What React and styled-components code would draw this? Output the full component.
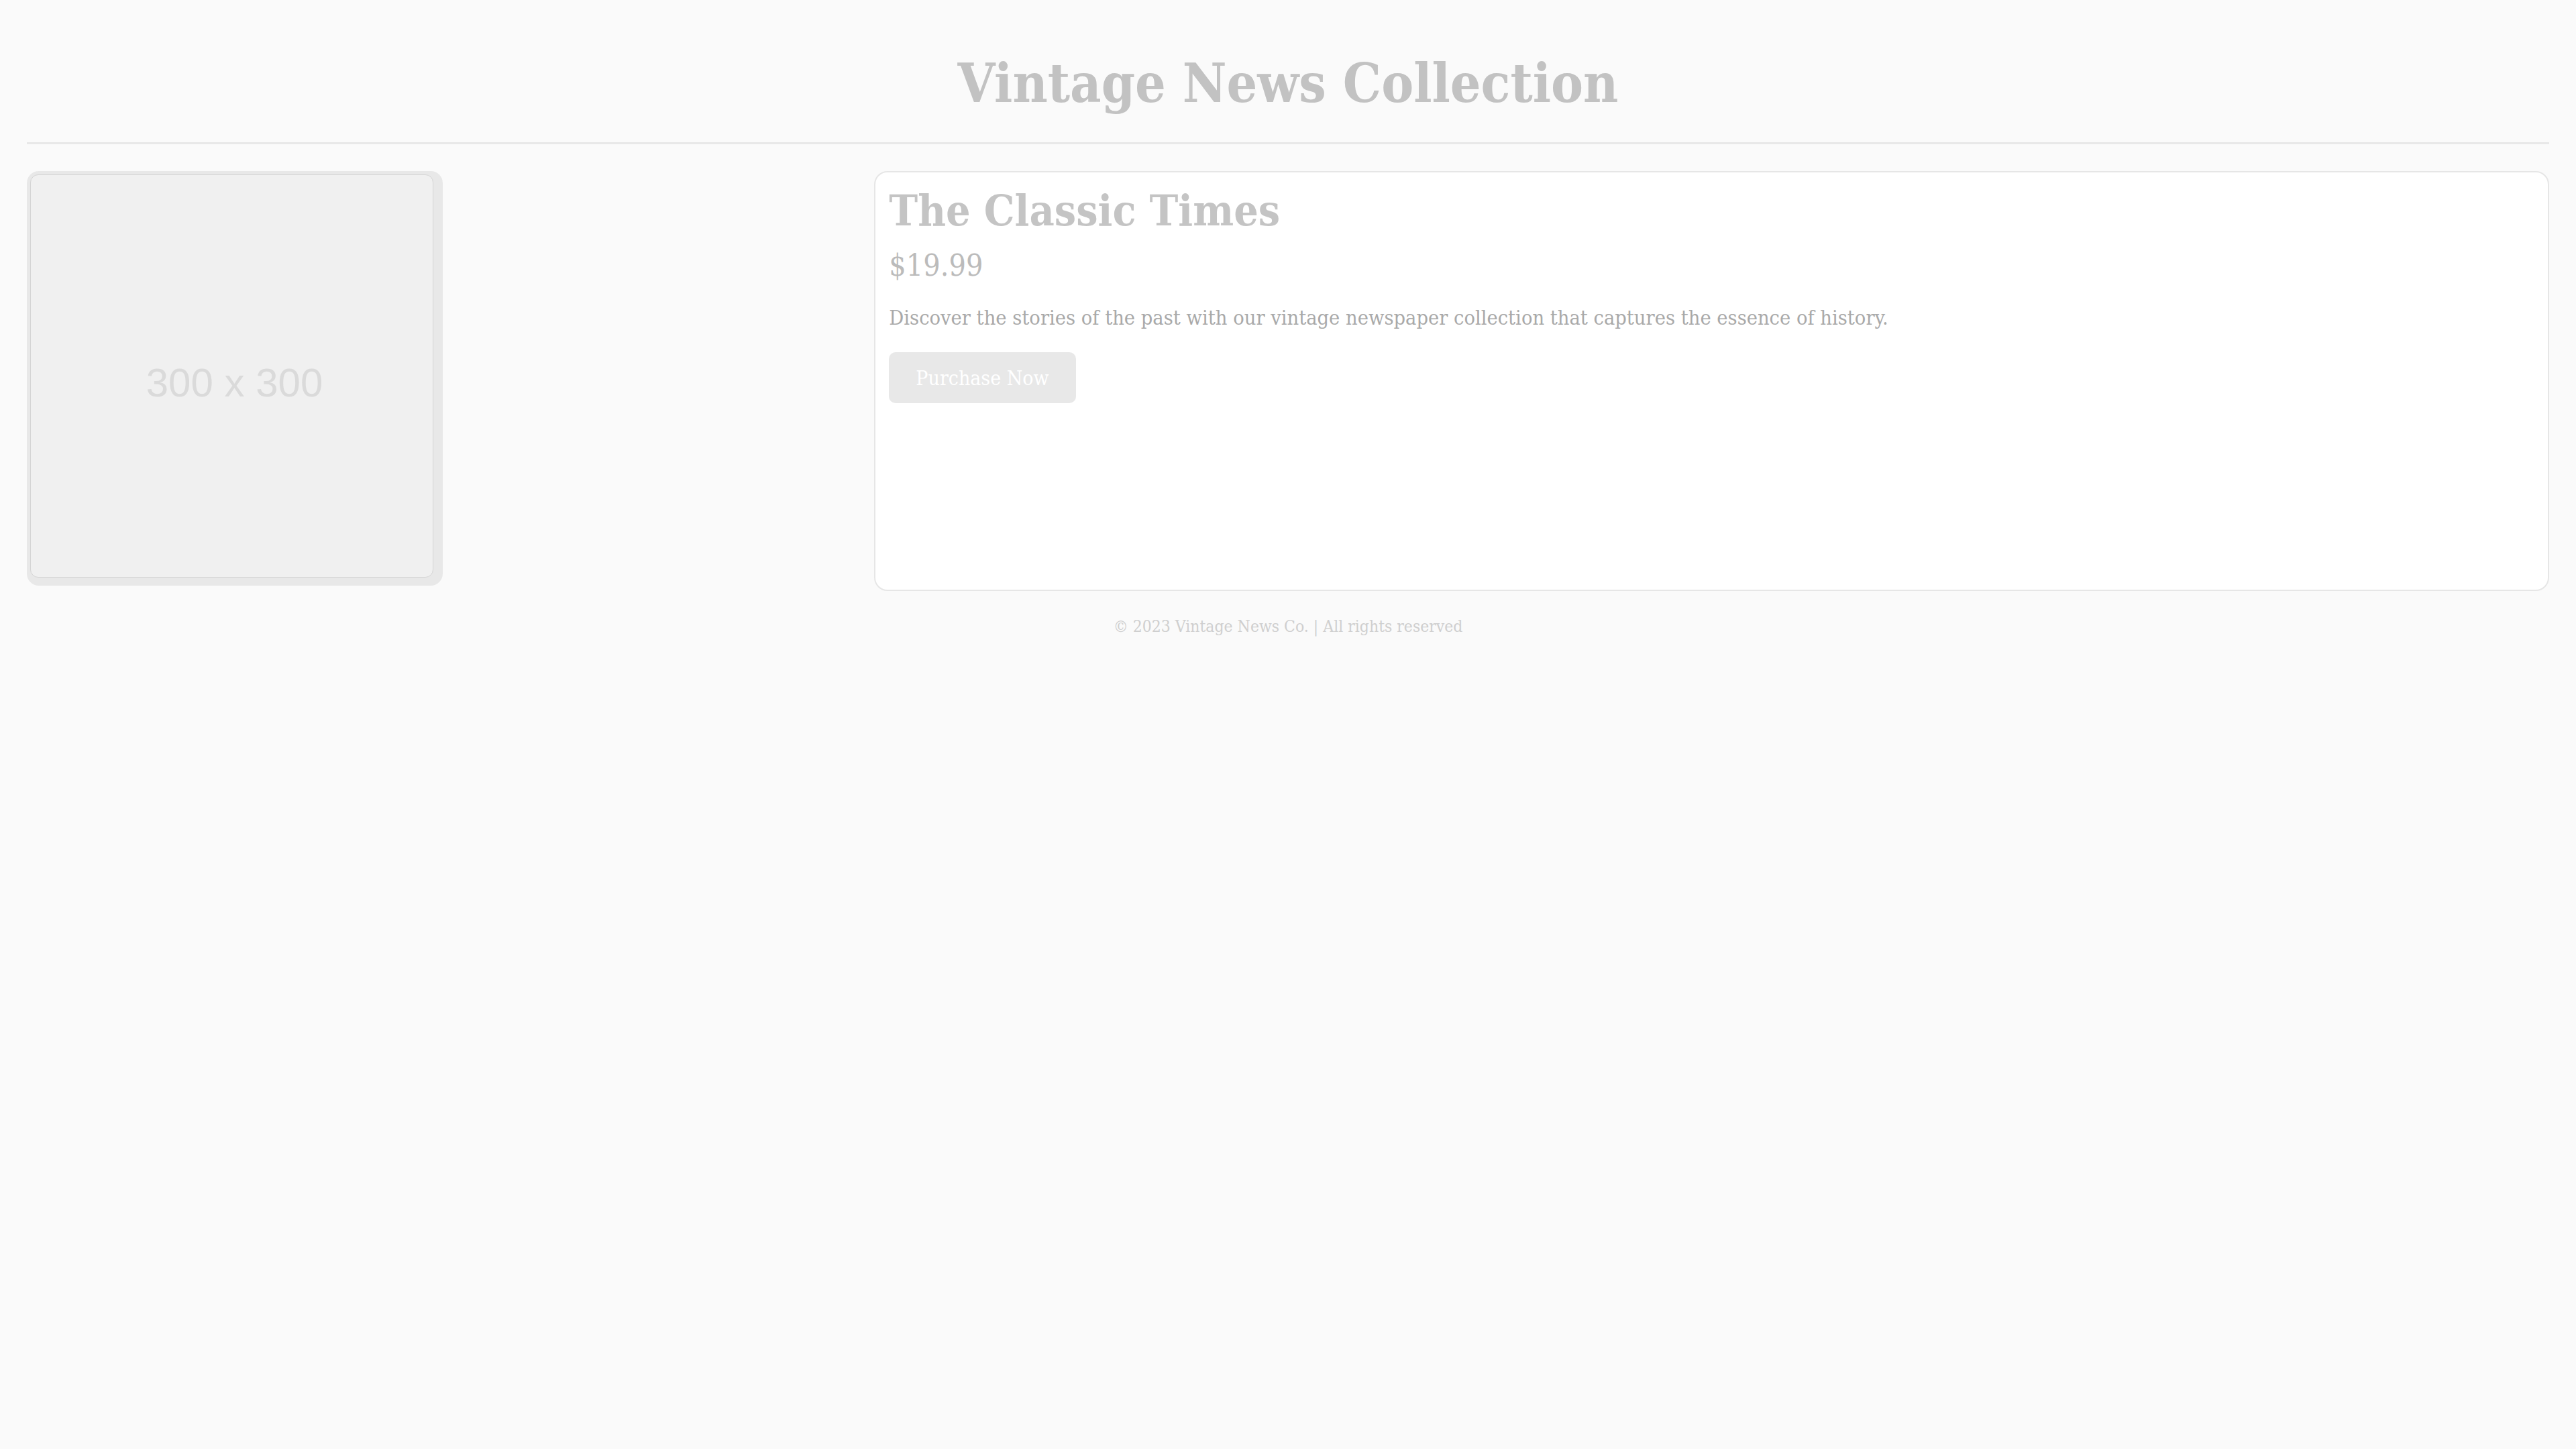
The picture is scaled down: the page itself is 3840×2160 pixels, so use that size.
import styled, { createGlobalStyle } from 'styled-components';

const serif = `'DejaVu Serif Condensed', 'DejaVu Serif', 'Liberation Serif', serif`;

const GlobalStyle = createGlobalStyle`
  html, body {
    margin: 0;
    background: #fafafa;
  }
  * { box-sizing: border-box; }
`;

const Page = styled.div`
  padding: 0 40px;
  font-family: ${serif};
`;

const Header = styled.header`
  text-align: center;
  padding: 79px 0 42px;
  border-bottom: 3px solid #e8e8e8;
  margin-bottom: 40px;
`;

const Title = styled.h1`
  margin: 0;
  font-size: 80px;
  line-height: 91px;
  font-weight: 700;
  color: #c2c2c2;
`;

const Product = styled.main`
  display: grid;
  grid-template-columns: 1fr 2fr;
  column-gap: 15px;
`;

const ImageCol = styled.div`
  align-self: start;
`;

const Frame = styled.div`
  width: 620px;
  height: 618px;
  padding: 5px 14px 12px 5px;
  background: #e8e8e8;
  border-radius: 18px;
`;

const Placeholder = styled.div`
  width: 100%;
  height: 100%;
  display: flex;
  align-items: center;
  justify-content: center;
  padding: 20px 0 0 8px;
  background: #f0f0f0;
  border: 1px solid #d4d4d4;
  border-radius: 12px;
  font-family: 'Liberation Sans', Arial, sans-serif;
  font-size: 60px;
  color: #dadada;
`;

const Card = styled.section`
  min-height: 626px;
  background: #fff;
  border: 2px solid #e6e6e6;
  border-radius: 20px;
  padding: 20px;
  display: flex;
  flex-direction: column;
  align-items: flex-start;
`;

const Name = styled.h2`
  margin: 0;
  font-size: 64px;
  line-height: 73px;
  font-weight: 700;
  color: #c4c4c4;
`;

const Price = styled.p`
  margin: 18px 0 0;
  font-size: 44.5px;
  line-height: 55px;
  color: #bbbbbb;
`;

const Description = styled.p`
  margin: 33px 0 0;
  font-size: 30.5px;
  line-height: 36px;
  color: #a9a9a9;
`;

const BuyButton = styled.button`
  margin-top: 33px;
  height: 76px;
  padding: 0 40px;
  border: none;
  border-radius: 10px;
  background: #e8e8e8;
  color: #fff;
  font-family: ${serif};
  font-size: 30px;
  cursor: pointer;
`;

const Footer = styled.footer`
  text-align: center;
  padding: 37px 0 20px;
  font-size: 24.5px;
  line-height: 32px;
  color: #cfcfcf;
`;

export default function App() {
  return (
    <>
      <GlobalStyle />
      <Page>
        <Header>
          <Title>Vintage News Collection</Title>
        </Header>
        <Product>
          <ImageCol>
            <Frame>
              <Placeholder>300 x 300</Placeholder>
            </Frame>
          </ImageCol>
          <Card>
            <Name>The Classic Times</Name>
            <Price>$19.99</Price>
            <Description>
              Discover the stories of the past with our vintage newspaper collection that captures the essence of history.
            </Description>
            <BuyButton>Purchase Now</BuyButton>
          </Card>
        </Product>
        <Footer>© 2023 Vintage News Co. | All rights reserved</Footer>
      </Page>
    </>
  );
}
